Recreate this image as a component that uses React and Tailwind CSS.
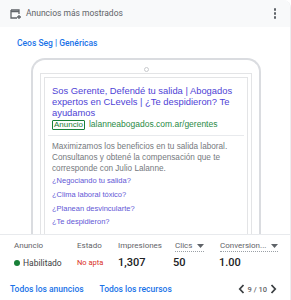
import React from 'react';

const ui = { fontFamily: 'Roboto, "Liberation Sans", Arial, sans-serif' };
const ad = { fontFamily: '"Liberation Sans", Arial, sans-serif' };

const Caret = () => (
  <svg width="7" height="4" viewBox="0 0 7 4" className="ml-[5px]">
    <path d="M0 0h7L3.5 4z" fill="#5f6368" />
  </svg>
);

const Chevron = ({ dir }) => (
  <svg width="7" height="10" viewBox="0 0 7 10">
    <path
      d={dir === 'left' ? 'M5.5 1L1.8 5l3.7 4' : 'M1.5 1l3.7 4-3.7 4'}
      fill="none"
      stroke="#3c4043"
      strokeWidth="1.8"
    />
  </svg>
);

const Stat = ({ label, children, dropdown, className = '' }) => (
  <div className={`flex flex-col ${className}`}>
    <div className="h-[14px] flex items-center text-[8px] text-[#5f6368]">
      {dropdown ? (
        <span className="flex items-center border-b border-dotted border-[#9aa0a6] leading-[11px]">
          {label}
          <Caret />
        </span>
      ) : (
        label
      )}
    </div>
    <div className="h-[20px] flex items-center">{children}</div>
  </div>
);

export default function App() {
  const links = ['¿Negociando tu salida?', '¿Clima laboral tóxico?', '¿Planean desvincularte?', '¿Te despidieron?'];

  return (
    <div className="w-[291px] h-[300px] overflow-hidden bg-white rounded-tr-[8px] border-r border-[#eceef0]" style={ui}>
      {/* Header */}
      <div className="h-[27px] bg-[#f8f9fa] flex items-center pl-[10px] pr-[14px]">
        <svg width="11" height="10" viewBox="0 0 11 10" className="mr-[5px]">
          <path d="M1 1h8v4" fill="none" stroke="#5f6368" strokeWidth="1.3" />
          <path d="M1 1v8h6" fill="none" stroke="#5f6368" strokeWidth="1.3" />
          <path d="M1 2.5h8" stroke="#5f6368" strokeWidth="1.6" />
          <path d="M9 6v4M7 8h4" stroke="#5f6368" strokeWidth="1.3" />
        </svg>
        <span className="text-[8.5px] text-[#5f6368] flex-1">Anuncios más mostrados</span>
        <div className="flex flex-col gap-[1.5px]">
          <span className="w-[2.5px] h-[2.5px] rounded-full bg-[#5f6368]" />
          <span className="w-[2.5px] h-[2.5px] rounded-full bg-[#5f6368]" />
          <span className="w-[2.5px] h-[2.5px] rounded-full bg-[#5f6368]" />
        </div>
      </div>

      {/* Campaign */}
      <div className="pt-[10px] pl-[17px] h-[31px] text-[8.5px] font-medium text-[#1a73e8] leading-[12px]">
        Ceos Seg | Genéricas
      </div>

      {/* Phone preview */}
      <div className="h-[177px] overflow-hidden border-b border-[#e8eaed]">
        <div className="ml-[31px] w-[230px] h-[200px] border-2 border-b-0 border-[#dadce0] rounded-t-[14px]">
          <div className="h-[12px] flex justify-center items-end">
            <span className="w-[5px] h-[5px] rounded-full border border-[#c8cacd]" />
          </div>
          <div className="mt-[1px] mx-[7px] h-[200px] border border-[#e3e4e6] p-[3px]">
            <div className="h-full border border-[#e3e4e6] px-[7px] pt-[7px]" style={ad}>
              <div className="text-[9.4px] leading-[11px] text-[#4f43d6]">
                Sos Gerente, Defendé tu salida | Abogados expertos en CLevels | ¿Te despidieron? Te ayudamos
              </div>
              <div className="flex items-center mt-[1px] h-[11px]">
                <span className="border border-[#188038] text-[#188038] text-[8px] leading-[8px] px-[1px] rounded-[1px]">
                  Anuncio
                </span>
                <span className="ml-[4px] text-[8.5px] text-[#2a8a46]">lalanneabogados.com.ar/gerentes</span>
              </div>
              <div className="mt-[5px] -mx-[4px] border-t border-[#e8eaed]" />
              <div className="mt-[5px] text-[8.2px] leading-[11px] text-[#75797e]">
                Maximizamos los beneficios en tu salida laboral. Consultanos y obtené la compensación que te
                corresponde con Julio Lalanne.
              </div>
              <div className="flex flex-col">
                {links.map((l) => (
                  <div key={l} className="h-[13.7px] flex items-center text-[7.5px] text-[#6257d6]">
                    {l}
                  </div>
                ))}
              </div>
            </div>
          </div>
        </div>
      </div>

      {/* Stats */}
      <div className="flex pl-[14px] pt-[4px]">
        <Stat label="Anuncio" className="w-[63px]">
          <span className="w-[6px] h-[6px] rounded-full bg-[#188038] mr-[3px]" />
          <span className="text-[8.5px] text-[#3c4043]">Habilitado</span>
        </Stat>
        <Stat label="Estado" className="w-[41px]">
          <span className="text-[7.5px] text-[#d93025]">No apta</span>
        </Stat>
        <Stat label="Impresiones" className="w-[57px]">
          <span className="text-[11px] font-medium text-[#202124]">1,307</span>
        </Stat>
        <Stat label="Clics" dropdown className="w-[45px]">
          <span className="text-[11px] font-medium text-[#202124] -ml-[2px]">50</span>
        </Stat>
        <Stat label="Conversion..." dropdown className="w-[60px]">
          <span className="text-[11px] font-medium text-[#202124] -ml-[1px]">1.00</span>
        </Stat>
      </div>

      {/* Footer */}
      <div className="flex items-center pl-[10px] pr-[13px] mt-[10px] text-[8.5px] font-medium text-[#1a73e8]">
        <span>Todos los anuncios</span>
        <span className="ml-[16px] flex-1">Todos los recursos</span>
        <div className="flex items-center gap-[3px] text-[7.5px] text-[#5f6368]">
          <Chevron dir="left" />
          <span>9 / 10</span>
          <Chevron dir="right" />
        </div>
      </div>
    </div>
  );
}
